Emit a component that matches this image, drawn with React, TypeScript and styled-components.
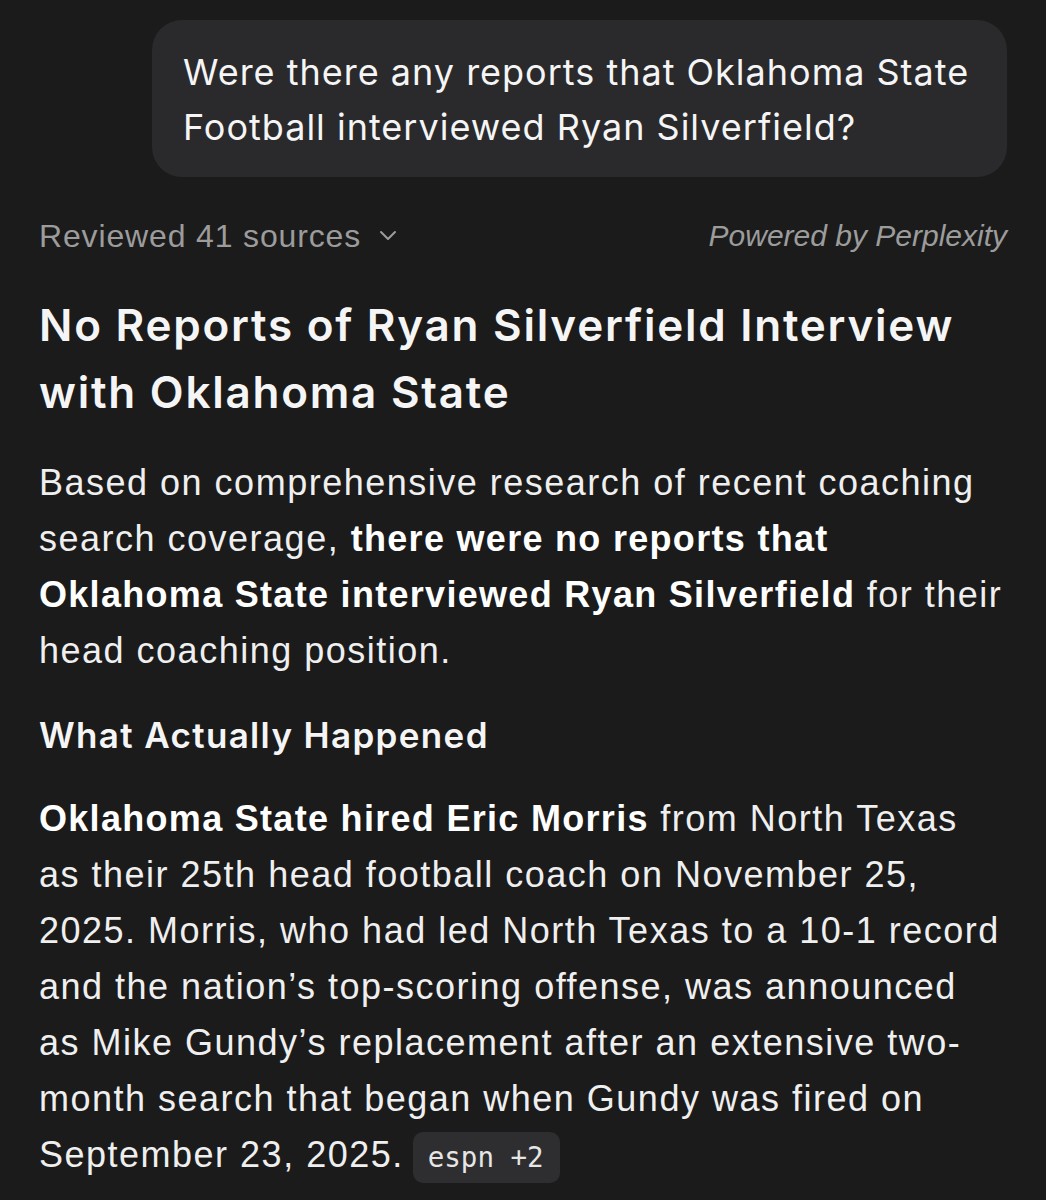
import React from "react";
import styled, { createGlobalStyle } from "styled-components";

const Global = createGlobalStyle`
  html, body { margin: 0; padding: 0; background: #1b1b1b; }
  body { font-family: "Liberation Sans", Arial, sans-serif; color: #f2f2f2; }
`;

const Page = styled.div`
  background: #1b1b1b;
  min-height: 1200px;
  padding: 20px 39px 0 39px;
  box-sizing: border-box;
  display: flex;
  flex-direction: column;
`;

const Bubble = styled.div`
  align-self: flex-end;
  width: 855px;
  box-sizing: border-box;
  background: #2a2a2c;
  border-radius: 30px;
  padding: 25px 20px 22px 31px;
  font-family: Inter, "Liberation Sans", sans-serif;
  font-size: 36px;
  line-height: 55px;
  color: #f5f5f5;
  letter-spacing: 1px;
`;

const MetaRow = styled.div`
  display: flex;
  justify-content: space-between;
  align-items: center;
  margin-top: 38px;
  height: 42px;
`;

const Sources = styled.div`
  display: flex;
  align-items: center;
  gap: 18px;
  font-size: 32px;
  letter-spacing: 0.85px;
  color: #9c9c9c;
`;

const Powered = styled.div`
  font-style: italic;
  font-size: 30px;
  color: #9c9c9c;
`;

const Heading = styled.h1`
  margin: 35px 0 0 0;
  font-family: Inter, "Liberation Sans", sans-serif;
  font-weight: 600;
  font-size: 44px;
  line-height: 67px;
  letter-spacing: 1.75px;
  color: #f5f5f5;
`;

const Para = styled.p<{ $top: number }>`
  margin: ${(p) => p.$top}px 0 0 0;
  font-size: 36px;
  line-height: 56px;
  letter-spacing: 1.5px;
  color: #efefef;
`;

const Strong = styled.strong`
  font-weight: 700;
  letter-spacing: 1.3px;
  color: #ffffff;
`;

const SubHeading = styled.h2`
  margin: 28px 0 0 0;
  font-family: Inter, "Liberation Sans", sans-serif;
  font-weight: 600;
  font-size: 35px;
  line-height: 56px;
  letter-spacing: 1.35px;
  color: #f5f5f5;
`;

const Badge = styled.span`
  display: inline-flex;
  align-items: center;
  height: 51px;
  padding: 0 16px 0 15px;
  margin-left: 9px;
  border-radius: 10px;
  background: #2e2e30;
  font-family: "DejaVu Sans Mono", "Liberation Mono", monospace;
  font-size: 27.5px;
  letter-spacing: 0;
  color: #e6e6e6;
  vertical-align: middle;
  white-space: pre;
`;

const Chevron = () => (
  <svg width="18" height="12" viewBox="0 0 18 12" fill="none">
    <path d="M2 2l7 7 7-7" stroke="#9c9c9c" strokeWidth="2" strokeLinecap="round" strokeLinejoin="round" />
  </svg>
);

export default function App() {
  return (
    <>
      <Global />
      <Page>
        <Bubble>
          Were there any reports that Oklahoma State Football interviewed Ryan Silverfield?
        </Bubble>
        <MetaRow>
          <Sources>
            Reviewed 41 sources <Chevron />
          </Sources>
          <Powered>Powered by Perplexity</Powered>
        </MetaRow>
        <Heading>No Reports of Ryan Silverfield Interview with Oklahoma State</Heading>
        <Para $top={29}>
          Based on comprehensive research of recent coaching search coverage,{" "}
          <Strong>there were no reports that Oklahoma State interviewed Ryan Silverfield</Strong> for their
          head coaching position.
        </Para>
        <SubHeading>What Actually Happened</SubHeading>
        <Para $top={28}>
          <Strong>Oklahoma State hired Eric Morris</Strong> from North Texas as their 25th head football coach
          on November 25, 2025. Morris, who had led North Texas to a 10-1 record and the nation’s
          top-scoring offense, was announced as Mike Gundy’s replacement after an extensive two-month
          search that began when Gundy was fired on September 23, 2025.
          <Badge>espn +2</Badge>
        </Para>
      </Page>
    </>
  );
}
